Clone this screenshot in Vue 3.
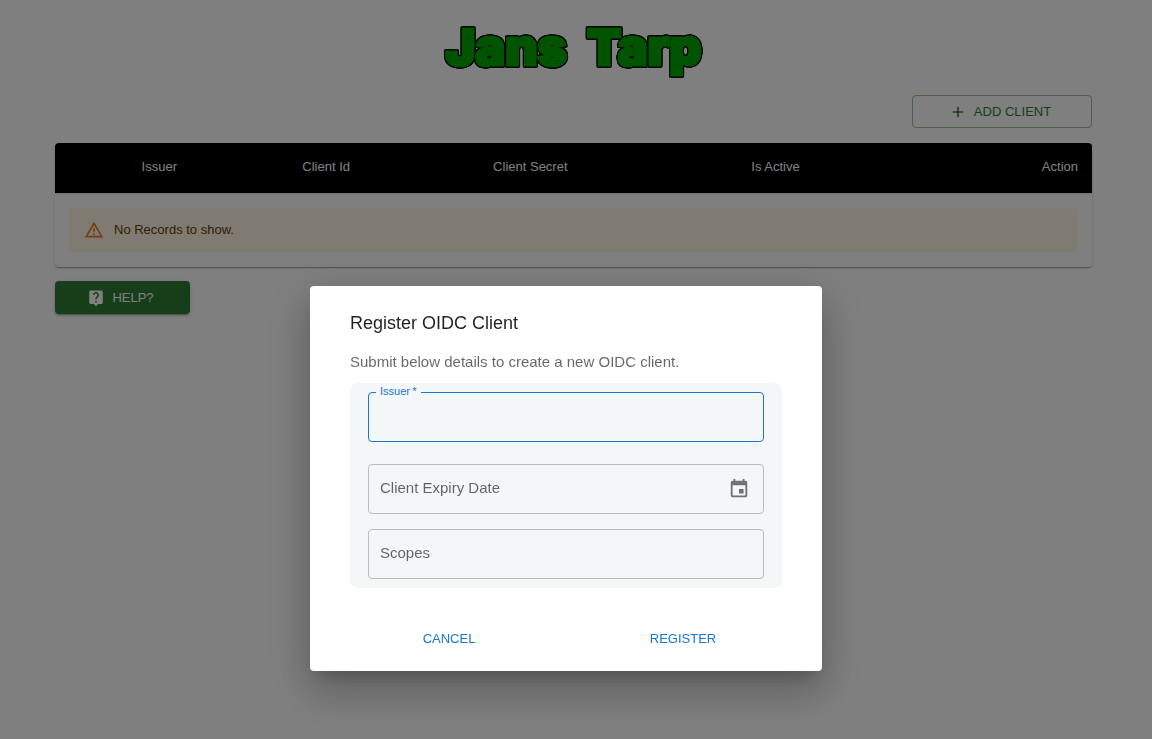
<script setup>
import { ref } from 'vue'

const issuer = ref('')
const expiry = ref('')
const scopes = ref('')
</script>

<template>
  <div class="page">
    <header class="brand">
      <h1 class="logo"><span>Jans</span><span>Tarp</span></h1>
    </header>

    <main class="content">
      <div class="toolbar">
        <button type="button" class="btn outlined">
          <svg class="icon" viewBox="0 0 24 24" aria-hidden="true"><path d="M19 13h-6v6h-2v-6H5v-2h6V5h2v6h6v2z" /></svg>
          ADD CLIENT
        </button>
      </div>

      <div class="paper">
        <table class="clients">
          <colgroup>
            <col class="c-expand" /><col class="c-issuer" /><col class="c-id" /><col class="c-secret" /><col /><col class="c-action" />
          </colgroup>
          <thead>
            <tr>
              <td></td>
              <th scope="col">Issuer</th>
              <th scope="col">Client Id</th>
              <th scope="col">Client Secret</th>
              <th scope="col">Is Active</th>
              <th scope="col" class="end">Action</th>
            </tr>
          </thead>
          <tbody>
            <tr>
              <td colspan="6">
                <div class="alert" role="alert">
                  <svg class="alert-icon" viewBox="0 0 24 24" aria-hidden="true"><path d="M12 5.99L19.53 19H4.47L12 5.99M12 2L1 21h22L12 2zm1 14h-2v2h2v-2zm0-6h-2v4h2v-4z" /></svg>
                  <span>No Records to show.</span>
                </div>
              </td>
            </tr>
          </tbody>
        </table>
      </div>

      <button type="button" class="btn filled">
        <svg class="icon" viewBox="0 0 24 24" aria-hidden="true"><path d="M19 2H5c-1.11 0-2 .9-2 2v14c0 1.1.89 2 2 2h4l3 3 3-3h4c1.1 0 2-.9 2-2V4c0-1.1-.9-2-2-2zm-6 16h-2v-2h2v2zm2.07-7.75l-.9.92C13.45 11.9 13 12.5 13 14h-2v-.5c0-1.1.45-2.1 1.17-2.83l1.24-1.26c.37-.36.59-.86.59-1.41 0-1.1-.9-2-2-2s-2 .9-2 2H8c0-2.21 1.79-4 4-4s4 1.79 4 4c0 .88-.36 1.68-.93 2.25z" /></svg>
        HELP?
      </button>
    </main>

    <div class="overlay">
      <form class="dialog" role="dialog" aria-modal="true" aria-labelledby="dialog-title" @submit.prevent>
        <h2 id="dialog-title">Register OIDC Client</h2>
        <p>Submit below details to create a new OIDC client.</p>
        <div class="fields">
          <div class="field active">
            <input id="issuer" v-model="issuer" type="text" required />
            <label for="issuer">Issuer&#8201;*</label>
          </div>
          <div class="field expiry">
            <input id="expiry" v-model="expiry" type="text" />
            <label for="expiry">Client Expiry Date</label>
            <button type="button" class="picker" aria-label="Choose date">
              <svg viewBox="0 0 24 24" aria-hidden="true"><path d="M17 12h-5v5h5v-5zM16 1v2H8V1H6v2H5c-1.11 0-1.99.9-1.99 2L3 19c0 1.1.89 2 2 2h14c1.1 0 2-.9 2-2V5c0-1.1-.9-2-2-2h-1V1h-2zm3 18H5V8h14v11z" /></svg>
            </button>
          </div>
          <div class="field">
            <input id="scopes" v-model="scopes" type="text" />
            <label for="scopes">Scopes</label>
          </div>
        </div>
        <div class="actions">
          <button type="button" class="btn text">CANCEL</button>
          <button type="submit" class="btn text">REGISTER</button>
        </div>
      </form>
    </div>
  </div>
</template>

<style>
body {
  margin: 0;
  background: #fff;
}
</style>

<style scoped>
.page {
  min-height: 100vh;
  box-sizing: border-box;
  padding: 17px 60px 20px 55px;
  font-family: "Liberation Sans", Arial, sans-serif;
  font-size: 13px;
  line-height: 18px;
  color: rgba(0, 0, 0, 0.87);
}
.page * {
  box-sizing: border-box;
}
.brand {
  display: flex;
  justify-content: center;
}
.logo {
  display: flex;
  gap: 20px;
  margin: 0;
  font-family: Inter, "Liberation Sans", sans-serif;
  font-weight: 900;
  font-size: 50px;
  line-height: 60px;
  color: #00a800;
  -webkit-text-stroke: 3px #00a800;
  filter: drop-shadow(1px 0 0 #000) drop-shadow(-1px 0 0 #000) drop-shadow(0 1px 0 #000) drop-shadow(0 -1px 0 #000);
}
.toolbar {
  display: flex;
  justify-content: flex-end;
  margin: 18px 0 15px;
}
.btn {
  display: inline-flex;
  align-items: center;
  justify-content: center;
  height: 33px;
  padding: 0 14px;
  border: 0;
  border-radius: 4px;
  background: none;
  font: inherit;
  cursor: pointer;
}
.icon {
  width: 18px;
  height: 18px;
  margin: 0 7px 0 -4px;
  fill: currentColor;
}
.outlined {
  width: 180px;
  border: 1px solid rgba(46, 125, 50, 0.5);
  color: #2e7d32;
}
.filled {
  width: 135px;
  margin-top: 14px;
  padding-top: 2px;
  background: #2e7d32;
  color: #fff;
  box-shadow: 0 3px 1px -2px rgba(0, 0, 0, 0.2), 0 2px 2px rgba(0, 0, 0, 0.14), 0 1px 5px rgba(0, 0, 0, 0.12);
}
.paper {
  border-radius: 4px;
  overflow: hidden;
  background: #fff;
  box-shadow: 0 2px 1px -1px rgba(0, 0, 0, 0.2), 0 1px 1px rgba(0, 0, 0, 0.14), 0 1px 3px rgba(0, 0, 0, 0.12);
}
.clients {
  width: 100%;
  table-layout: fixed;
  border-collapse: collapse;
}
.c-expand { width: 7%; }
.c-issuer { width: 15.5%; }
.c-id { width: 18.4%; }
.c-secret { width: 24.9%; }
.c-action { width: 10%; }
.clients thead {
  background: #000;
  color: #fff;
}
.clients th {
  height: 50px;
  padding: 0 14px 2px;
  font-weight: 400;
  text-align: left;
}
.clients th.end {
  text-align: right;
}
.clients tbody td {
  padding: 14px 14px 15px;
  border-top: 1px solid #e0e0e0;
}
.alert {
  display: flex;
  align-items: center;
  gap: 10px;
  height: 44px;
  padding: 0 15px;
  border-radius: 4px;
  background: #fff4e5;
  color: #663c00;
}
.alert-icon {
  width: 20px;
  height: 20px;
  fill: #ed6c02;
  opacity: 0.9;
}
.overlay {
  position: fixed;
  inset: 0;
  display: flex;
  justify-content: center;
  align-items: flex-start;
  padding: 286px 20px 0 0;
  background: rgba(0, 0, 0, 0.5);
}
.dialog {
  width: 512px;
  padding: 24px 40px 16px;
  border-radius: 4px;
  background: #fff;
  box-shadow: 0 11px 15px -7px rgba(0, 0, 0, 0.2), 0 24px 38px 3px rgba(0, 0, 0, 0.14), 0 9px 46px 8px rgba(0, 0, 0, 0.12);
}
.dialog h2 {
  margin: 0;
  font-size: 18px;
  line-height: 26px;
  font-weight: 400;
}
.dialog p {
  margin: 15px 0 10px;
  font-size: 15px;
  line-height: 22px;
  color: rgba(0, 0, 0, 0.6);
}
.fields {
  padding: 9px 18px;
  border-radius: 8px;
  background: #f3f7f8;
}
.field {
  position: relative;
  margin-top: 15px;
}
.field.active {
  margin-top: 0;
}
.field.expiry {
  margin-top: 22px;
}
.field input {
  display: block;
  width: 100%;
  height: 50px;
  padding: 0 12px;
  border: 1px solid #b8bcbd;
  border-radius: 4px;
  outline: 0;
  background: transparent;
  font: inherit;
  font-size: 15px;
}
.field label {
  position: absolute;
  top: 14px;
  left: 12px;
  font-size: 15px;
  line-height: 20px;
  color: rgba(0, 0, 0, 0.6);
}
.field.active input {
  border-color: #1976d2;
}
.field.active label {
  top: -8px;
  left: 8px;
  padding: 0 5px 0 4px;
  background: #f3f7f8;
  font-size: 11px;
  line-height: 14px;
  color: #1976d2;
}
.picker {
  position: absolute;
  top: 14px;
  right: 14px;
  padding: 0;
  border: 0;
  background: none;
  cursor: pointer;
}
.picker svg {
  display: block;
  width: 22px;
  height: 22px;
  fill: rgba(0, 0, 0, 0.54);
}
.actions {
  display: grid;
  grid-template-columns: 1fr 1fr;
  justify-items: center;
  margin: 34px -18px 0;
}
.text {
  color: #1976d2;
}
</style>
